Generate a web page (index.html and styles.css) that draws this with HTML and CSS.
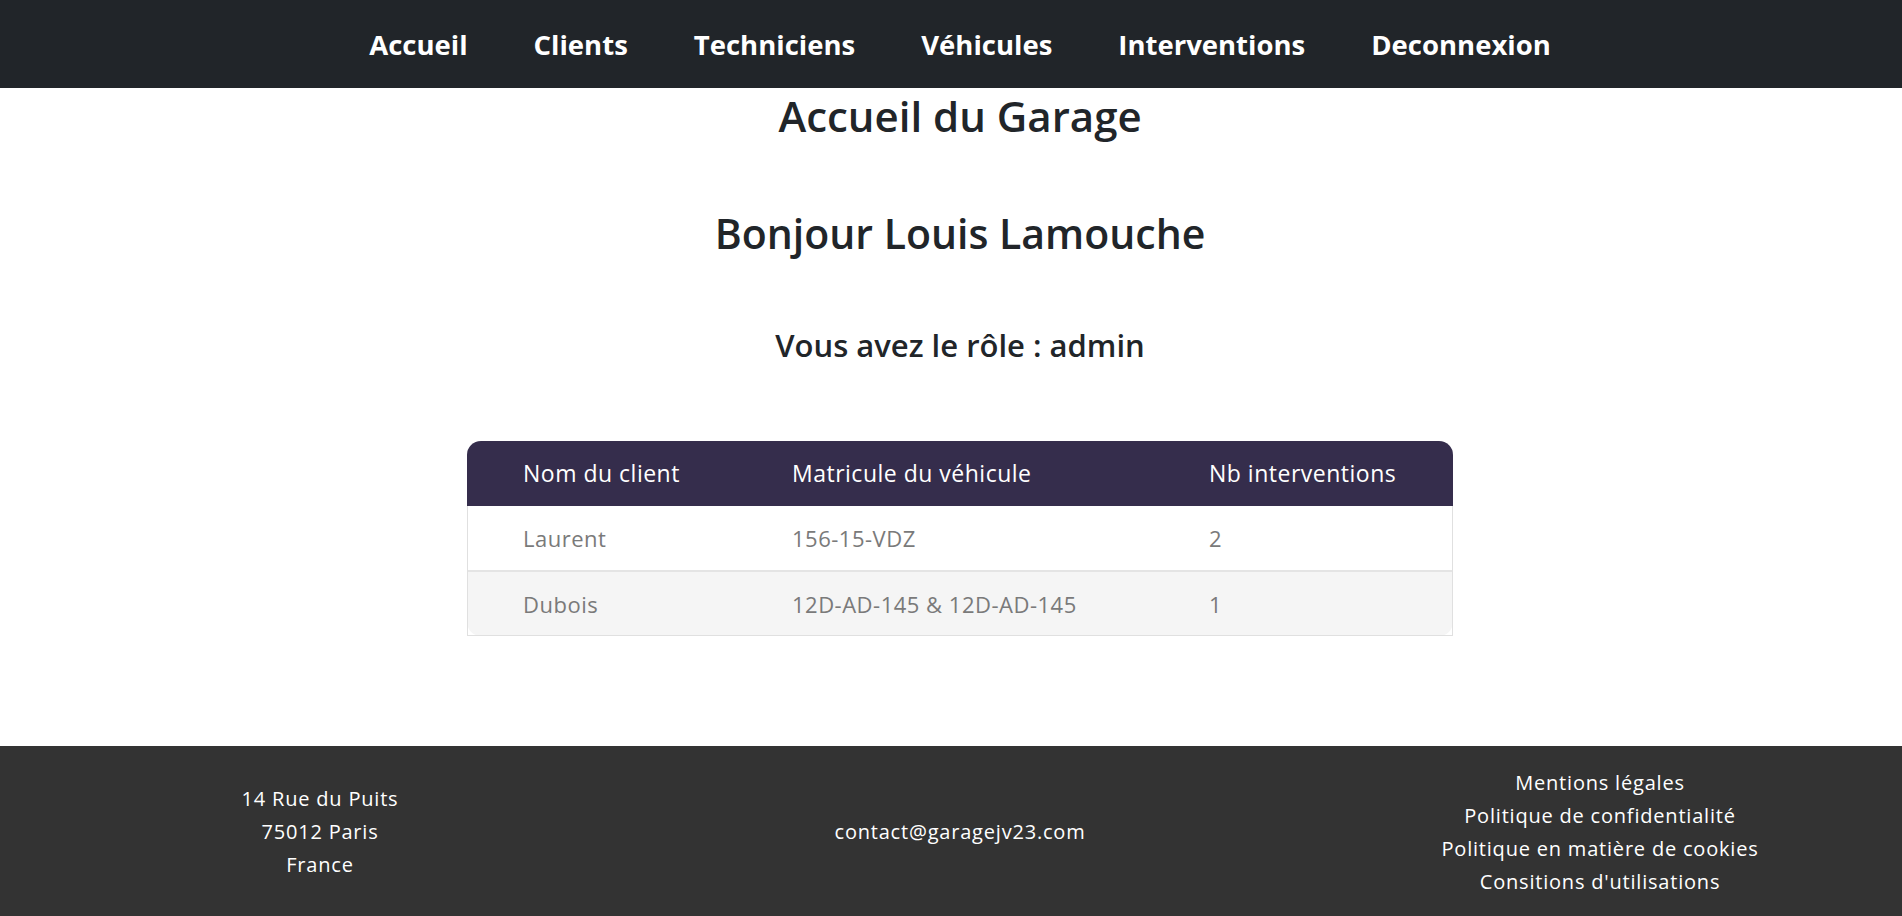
FILE: index.html
```html
<!DOCTYPE html>
<html lang="fr">
<head>
<meta charset="utf-8">
<title>Accueil du Garage</title>
<link rel="stylesheet" href="styles.css">
</head>
<body>
<nav class="topnav">
  <ul class="topnav-list">
    <li><a href="#">Accueil</a></li>
    <li><a href="#">Clients</a></li>
    <li><a href="#">Techniciens</a></li>
    <li><a href="#">Véhicules</a></li>
    <li><a href="#">Interventions</a></li>
    <li><a href="#">Deconnexion</a></li>
  </ul>
</nav>
<main class="main">
  <h1 class="title">Accueil du Garage</h1>
  <h1 class="hello">Bonjour Louis Lamouche</h1>
  <h2 class="role">Vous avez le rôle : admin</h2>
  <div class="tbl-wrap">
    <div class="tbl-frame">
      <div class="tbl-clip">
        <table class="tbl">
          <colgroup>
            <col class="c1"><col class="c2"><col class="c3">
          </colgroup>
          <thead>
            <tr><th>Nom du client</th><th>Matricule du véhicule</th><th>Nb interventions</th></tr>
          </thead>
          <tbody>
            <tr><td>Laurent</td><td>156-15-VDZ</td><td>2</td></tr>
            <tr class="alt"><td>Dubois</td><td>12D-AD-145 &amp; 12D-AD-145</td><td>1</td></tr>
          </tbody>
        </table>
      </div>
    </div>
  </div>
</main>
<footer class="footer">
  <div class="fcol">
    <span>14 Rue du Puits</span>
    <span>75012 Paris</span>
    <span>France</span>
  </div>
  <div class="fcol">
    <span>contact@garagejv23.com</span>
  </div>
  <div class="fcol">
    <a href="#">Mentions légales</a>
    <a href="#">Politique de confidentialité</a>
    <a href="#">Politique en matière de cookies</a>
    <a href="#">Consitions d'utilisations</a>
  </div>
</footer>
</body>
</html>
```

FILE: styles.css
```css
* { box-sizing: border-box; }
html, body { margin: 0; padding: 0; }
body {
  font-family: "Open Sans", "Noto Sans", "Liberation Sans", sans-serif;
  color: #212529;
  background: #fff;
}

.topnav {
  background: #212529;
  height: 88px;
  display: flex;
  align-items: center;
  justify-content: center;
  padding-left: 18px;
}
.topnav-list {
  list-style: none;
  margin: 0;
  padding: 0;
  display: flex;
  gap: 66px;
}
.topnav-list a {
  color: #fff;
  text-decoration: none;
  font-weight: 700;
  font-size: 27.5px;
  letter-spacing: 0;
}

.main {
  display: flex;
  flex-direction: column;
  align-items: stretch;
  padding-left: 18px;
}
.title, .hello, .role {
  text-align: center;
  font-weight: 600;
  line-height: 1.2;
  margin: 0;
}
.title { font-size: 42px; margin-top: 3px; }
.hello { font-size: 41px; margin-top: 68px; }
.role { font-size: 31px; margin-top: 68px; }

.tbl-wrap {
  margin-top: 77px;
  margin-bottom: 110px;
  display: flex;
  justify-content: center;
}
.tbl-frame {
  position: relative;
  width: 986px;
}
.tbl-frame::after {
  content: "";
  position: absolute;
  left: 0; right: 0; top: 65px; bottom: 0;
  border: 1px solid #e0e0e0;
  border-top: none;
  pointer-events: none;
}
.tbl-clip {
  border-radius: 14px;
  overflow: hidden;
}
.tbl {
  width: 100%;
  border-collapse: collapse;
  table-layout: fixed;
}
.c1 { width: 269px; }
.c2 { width: 417px; }
.c3 { width: 300px; }
.tbl th {
  background: #352d4c;
  color: #fff;
  font-weight: 400;
  font-size: 23px;
  text-align: left;
  height: 65px;
  padding: 0 0 0 56px;
  letter-spacing: 0.5px;
  white-space: nowrap;
}
.tbl td {
  color: #7a7a7a;
  font-size: 22px;
  height: 65px;
  padding: 0 0 0 56px;
  background: #fff;
  letter-spacing: 0.5px;
  white-space: nowrap;
}
.tbl tbody tr + tr td { border-top: 2px solid #e4e4e4; }
.tbl tr.alt td { background: #f5f5f5; }

.footer {
  background: #333333;
  color: #fff;
  display: grid;
  grid-template-columns: repeat(3, 640px);
  align-items: center;
  padding: 20px 0;
  overflow: hidden;
  font-size: 20px;
  letter-spacing: 0.8px;
}
.fcol {
  display: flex;
  flex-direction: column;
  align-items: center;
  line-height: 33px;
}
.fcol a { color: #fff; text-decoration: none; }
```
